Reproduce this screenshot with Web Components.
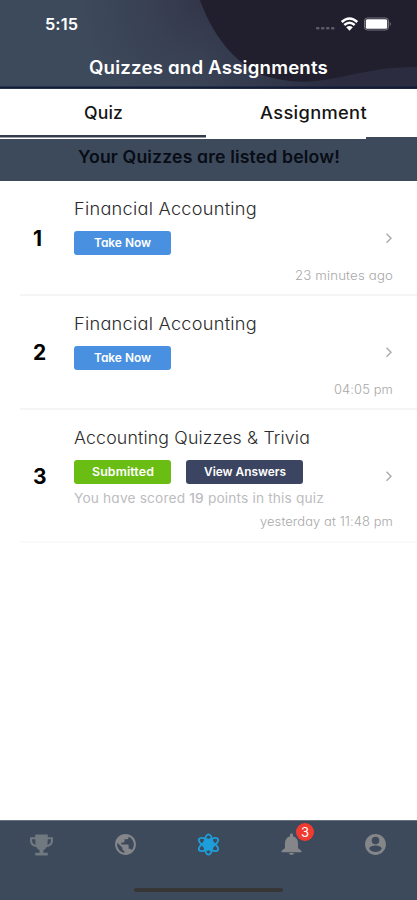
<!DOCTYPE html>
<html lang="en">
<head>
<meta charset="utf-8">
<title>Quizzes and Assignments</title>
<style>
html,body{margin:0;height:100%;background:#fff}
body{font-family:Inter,"Liberation Sans",sans-serif;font-feature-settings:"cv11","ss03";overflow:hidden}
</style>
</head>
<body>
<quiz-app></quiz-app>
<script>
class Base extends HTMLElement{
  constructor(){super();this.attachShadow({mode:'open'})}
  connectedCallback(){this.shadowRoot.innerHTML=this.view();if(this.ready)this.ready()}
  at(n){return this.getAttribute(n)||''}
}
// Label that takes the given width, partly by tracking and partly by widening its letters.
customElements.define('fit-text',class extends Base{
  view(){return `<style>:host{display:block;width:${this.at('w')}px;white-space:nowrap;flex:none}span{display:inline-block;transform-origin:0 50%}</style><span><slot></slot></span>`}
  ready(){
    const s=this.shadowRoot.querySelector('span'),n=this.textContent.length,w=+this.at('w');
    const nat=s.getBoundingClientRect().width,k=Math.pow(w/nat,.7);
    s.style.letterSpacing=((w/k-nat)/n).toFixed(3)+'px';
    s.style.transform=`scaleX(${k.toFixed(4)})`;
  }
});
customElements.define('status-bar',class extends Base{
  view(){return `<style>
  :host{display:flex;height:48px;align-items:center;padding:0 26px 0 45px;color:#fff;font-size:16px;font-weight:600;box-sizing:border-box}
  svg{margin-left:auto}</style><fit-text w="33">5:15</fit-text>
  <svg width="76" height="16" viewBox="0 0 76 16"><g fill="#5c5b6a"><rect x="1" y="11" width="3.500" height="2.500" rx="1"/><rect x="6" y="11" width="3.500" height="2.500" rx="1"/><rect x="11" y="11" width="3.500" height="2.500" rx="1"/><rect x="16" y="11" width="3.500" height="2.500" rx="1"/></g>
  <g fill="none" stroke="#fff" stroke-width="2.400"><path d="M26.700 6Q34.500-1.200 42.300 6M29.300 9Q34.500 4.300 39.700 9"/></g><path d="M31.200 11.200Q34.500 8.600 37.800 11.200L34.500 14.700Z" fill="#fff"/>
  <rect x="49.500" y="2" width="24" height="12" rx="3" fill="none" stroke="#777681"/><rect x="50.800" y="3.200" width="21.400" height="9.600" rx="1.500" fill="#fff"/><path d="M74.800 6v4q1-.5 1-2t-1-2" fill="#777681"/></svg>`}
});
customElements.define('app-header',class extends Base{
  view(){return `<style>
  :host{display:block;position:relative;height:89px;background:#3d4a5c}
  .bg{position:absolute;inset:0}
  .c{position:relative}
  .t{display:flex;justify-content:center;color:#fff;font-size:18px;font-weight:600;line-height:39px}</style>
  <svg class="bg" width="417" height="89"><defs>
  <radialGradient id="g" gradientUnits="userSpaceOnUse" cx="205" cy="0" r="125"><stop offset="0" stop-color="#333549"/><stop offset=".4" stop-color="#383f52"/><stop offset="1" stop-color="#3d4a5c"/></radialGradient>
  <linearGradient id="h" gradientUnits="userSpaceOnUse" x1="200" y1="0" x2="330" y2="0"><stop offset="0" stop-color="#2b2c40" stop-opacity="0"/><stop offset="1" stop-color="#2b2c40"/></linearGradient></defs>
  <rect width="417" height="89" fill="url(#g)"/><rect x="200" width="217" height="89" fill="url(#h)"/><path d="M200 0C211 31 232 62 262 75C322 94 350 66 417 67V0Z" fill="#211f2d"/><rect y="86.500" width="417" height="2" fill="#111c38"/></svg>
  <div class="c"><status-bar></status-bar><div class="t"><fit-text w="239">Quizzes and Assignments</fit-text></div></div>`}
});
customElements.define('tab-strip',class extends Base{
  view(){return `<style>
  :host{display:grid;grid-template-columns:207px 1fr;height:50px;background:linear-gradient(#fff,#fff) 0 0/366px 50px no-repeat,linear-gradient(#fff,#fff) 0 0/100% 48px no-repeat,#3d4a5c;font-size:17px;font-weight:500;color:#141414;line-height:49px}
  div{display:flex;justify-content:center;box-sizing:border-box;height:49px}
  .on{background:linear-gradient(#343b4d,#343b4d) 0 46px/206px 2.500px no-repeat}
  .two{padding-left:3px}</style>
  <div class="on"><fit-text w="39">Quiz</fit-text></div><div class="two"><fit-text w="107">Assignment</fit-text></div>`}
});
customElements.define('list-banner',class extends Base{
  view(){return `<style>:host{display:flex;justify-content:center;height:42px;background:#3d4a5c;color:#080c15;font-size:17px;font-weight:600;line-height:37px}</style><fit-text w="262">Your Quizzes are listed below!</fit-text>`}
});
customElements.define('pill-button',class extends Base{
  view(){return `<style>:host{display:flex;justify-content:center;width:${this.at('width')}px;height:24px;border-radius:3px;background:${this.at('color')};color:#fff;font-size:12px;font-weight:600;line-height:24px}</style><slot></slot>`}
});
customElements.define('quiz-row',class extends Base{
  view(){return `<style>
  :host{display:grid;grid-template-columns:54px 1fr 20px;height:${this.at('height')}px;margin-left:20px;padding-right:19px;border-bottom:2px solid ${this.at('rule')||'#f5f5f5'};box-sizing:border-box}
  .n{align-self:center;padding:2px 0 0 13px;font-size:21px;font-weight:700;color:#000;line-height:24px}
  .m{display:flex;flex-direction:column;min-width:0}
  .title{font-size:17px;font-weight:300;color:#2c2c2c;line-height:24px;margin-top:16px}
  .b{display:flex;gap:15px;margin-top:10px}
  .score{font-size:13px;color:#bcbcc1;line-height:16px;margin-top:6px}
  .time{font-size:12.500px;font-weight:300;color:#a8a8a8;line-height:16px;margin:auto -15px ${this.at('gap')||10}px auto}
  svg{align-self:center}
  </style><div class="n">${this.at('n')}</div><div class="m"><div class="title"><slot name="title"></slot></div><div class="b"><slot name="buttons"></slot></div><div class="score"><slot name="score"></slot></div><div class="time"><slot name="time"></slot></div></div>
  <svg width="20" height="12" viewBox="0 0 20 12"><path d="M8.500 1.700L13 6.200L8.500 10.700" fill="none" stroke="#aaa" stroke-width="1.400"/></svg>`}
});
const icons={
 trophy:'<path d="M6 2.500h12v2.500h5v3.500c0 4-3 5.800-6 6-.8 1.700-2.200 2.700-3.200 3V20H18v2.500H6V20h4.200v-2.500C9.200 17.200 7.800 16.200 7 14.500c-3-.2-6-2-6-6V5h5zM3 7v1.500c0 2 1.400 3.300 3.300 3.800L6 7zM18 7l-.3 5.300c1.900-.5 3.300-1.800 3.300-3.800V7z" fill-rule="evenodd"/>',
 globe:'<path d="M12 2C6.480 2 2 6.480 2 12s4.480 10 10 10 10-4.480 10-10S17.520 2 12 2zm-1 17.930c-3.950-.49-7-3.850-7-7.930 0-.62.080-1.210.21-1.790L9 15v1c0 1.100.9 2 2 2v1.930zm6.900-2.540c-.26-.81-1-1.390-1.900-1.390h-1v-3c0-.55-.45-1-1-1H8v-2h2c.55 0 1-.45 1-1V7h2c1.100 0 2-.9 2-2v-.41c2.930 1.190 5 4.060 5 7.410 0 2.080-.8 3.970-2.100 5.390z"/>',
 bell:'<path d="M12 22c1.300 0 2.300-.8 2.500-1.800h-5C9.700 21.200 10.700 22 12 22zM18.300 15.500v-4.500c0-3.700-1.800-6.300-4.800-7V2.800a1.500 1.500 0 0 0-3 0V4c-3 .7-4.800 3.300-4.800 7v4.500L2.500 18v1.500h19V18z"/>',
 user:'<path d="M12 2C6.480 2 2 6.480 2 12s4.480 10 10 10 10-4.480 10-10S17.520 2 12 2zm0 2.500a3.600 3.600 0 1 1 0 7.200 3.600 3.600 0 0 1 0-7.200zm0 14.700c-2.500 0-4.710-1.280-6-3.220.03-1.990 4-2.980 6-2.980s5.970.99 6 2.980C16.710 17.920 14.500 19.200 12 19.200z"/>',
 atom:'<g fill="none" stroke="#1d9fdc" stroke-width="1.700"><ellipse cx="12" cy="12" rx="4" ry="9.800"/><ellipse cx="12" cy="12" rx="4" ry="10.500" transform="rotate(60 12 12)"/><ellipse cx="12" cy="12" rx="4" ry="10.500" transform="rotate(-60 12 12)"/></g><circle cx="12" cy="12" r="5" fill="#1d9fdc"/>'
};
customElements.define('nav-icon',class extends Base{
  view(){const b=this.at('badge');return `<style>
  :host{display:flex;justify-content:center;position:relative;padding-top:11px;height:26px}
  i{position:absolute;left:calc(50% + 4px);top:2px;width:18px;height:18px;border-radius:9px;background:#f13b30;color:#fff;font:normal 13px/18px Inter,sans-serif;text-align:center}</style>
  <svg width="25" height="25" viewBox="0 0 24 24" fill="${this.at('color')||'#84868a'}">${icons[this.at('name')]}</svg>${b?`<i>${b}</i>`:''}`}
});
customElements.define('bottom-nav',class extends Base{
  view(){return `<style>
  :host{display:flex;flex-direction:column;justify-content:space-between;height:80px;background:#3d4a5c;border-top:1px solid #69717f;box-sizing:border-box}
  nav{display:grid;grid-template-columns:repeat(5,1fr)}
  .home{width:149px;height:4px;border-radius:2px;background:#363637;margin:0 auto 8px}</style>
  <nav><nav-icon name="trophy" color="#717980"></nav-icon><nav-icon name="globe"></nav-icon><nav-icon name="atom"></nav-icon><nav-icon name="bell" badge="3"></nav-icon><nav-icon name="user"></nav-icon></nav><div class="home"></div>`}
});
customElements.define('quiz-app',class extends Base{
  view(){return `<style>:host{display:flex;flex-direction:column;width:417px;height:900px;background:#fff}main{flex:1}</style>
  <app-header></app-header><tab-strip></tab-strip><list-banner></list-banner>
  <main>
  <quiz-row n="1" height="115"><fit-text slot="title" w="183">Financial Accounting</fit-text><pill-button slot="buttons" width="97" color="#4990e0"><fit-text w="57">Take Now</fit-text></pill-button><fit-text slot="time" w="98">23 minutes ago</fit-text></quiz-row>
  <quiz-row n="2" height="114"><fit-text slot="title" w="183">Financial Accounting</fit-text><pill-button slot="buttons" width="97" color="#4990e0"><fit-text w="57">Take Now</fit-text></pill-button><fit-text slot="time" w="59">04:05 pm</fit-text></quiz-row>
  <quiz-row n="3" height="133" rule="#fafafa" gap="11"><fit-text slot="title" w="236">Accounting Quizzes &amp; Trivia</fit-text><pill-button slot="buttons" width="97" color="#6abd12"><fit-text w="62">Submitted</fit-text></pill-button><pill-button slot="buttons" width="117" color="#3b4460"><fit-text w="82">View Answers</fit-text></pill-button><fit-text slot="score" w="250">You have scored <b style="font-weight:500">19</b> points in this quiz</fit-text><fit-text slot="time" w="133">yesterday at 11:48 pm</fit-text></quiz-row>
  </main><bottom-nav></bottom-nav>`}
});
</script>
</body>
</html>
